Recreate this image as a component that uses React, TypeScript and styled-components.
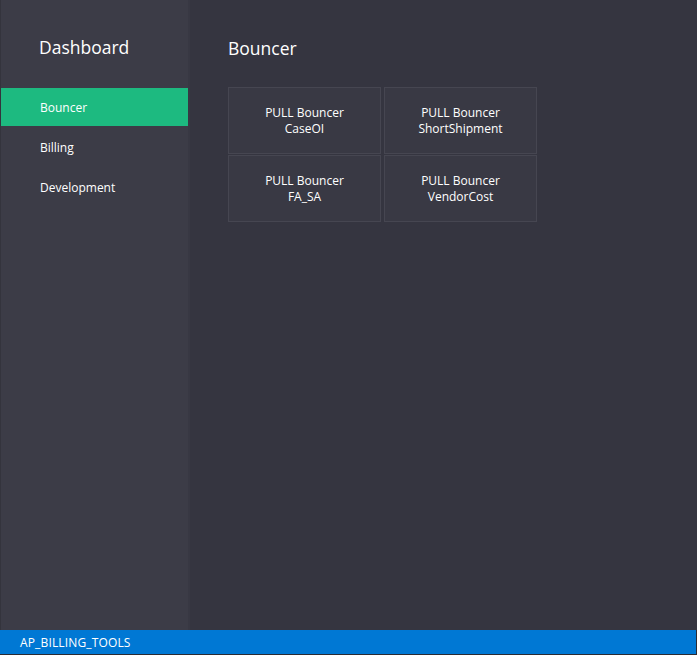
import React from "react";
import styled, { createGlobalStyle } from "styled-components";

const Global = createGlobalStyle`
  html, body { margin: 0; padding: 0; height: 100%; background: #353540; }
  #root { height: 100%; }
  * { box-sizing: border-box; }
`;

const Window = styled.div`
  width: 697px;
  height: 655px;
  display: flex;
  flex-direction: column;
  font-family: "Open Sans", "Noto Sans", "DejaVu Sans", sans-serif;
  color: #ffffff;
  background: #353540;
`;

const Body = styled.div`
  flex: 1;
  display: flex;
  min-height: 0;
`;

const Sidebar = styled.nav`
  width: 190px;
  flex-shrink: 0;
  background: #3c3c47;
  border-right: 2px solid #383843;
  border-left: 1px solid #34343d;
  display: flex;
  flex-direction: column;
  padding-top: 34px;
`;

const Brand = styled.h1`
  margin: 0 0 27px 38px;
  font-size: 17.5px;
  font-weight: 400;
  line-height: 26px;
  color: #ffffff;
`;

const NavItem = styled.div<{ $active?: boolean }>`
  height: 38px;
  margin: 1px 0;
  padding-left: 39px;
  display: flex;
  align-items: center;
  font-size: 12px;
  background: ${(p) => (p.$active ? "#1dba80" : "transparent")};
  color: #ffffff;
`;

const Main = styled.main`
  flex: 1;
  padding: 35px 0 0 38px;
  display: flex;
  flex-direction: column;
`;

const Title = styled.h2`
  margin: 0 0 26px 0;
  font-size: 17.5px;
  font-weight: 400;
  line-height: 26px;
  color: #ffffff;
`;

const Grid = styled.div`
  display: grid;
  grid-template-columns: repeat(2, 153px);
  grid-auto-rows: 67px;
  column-gap: 3px;
  row-gap: 1px;
`;

const Tile = styled.button`
  background: #393944;
  border: 1px solid #464651;
  color: #ffffff;
  font-family: inherit;
  font-size: 12px;
  line-height: 16px;
  display: flex;
  flex-direction: column;
  align-items: center;
  justify-content: center;
  padding: 0;
  cursor: pointer;
`;

const StatusBar = styled.footer`
  height: 25px;
  background: #0078d4;
  border-right: 1px solid #2b2b33;
  border-bottom: 1px solid #2b2b33;
  display: flex;
  align-items: center;
  padding-left: 20px;
  font-size: 12px;
  letter-spacing: 0.15px;
  color: #ffffff;
`;

const tiles = [
  ["PULL Bouncer", "CaseOI"],
  ["PULL Bouncer", "ShortShipment"],
  ["PULL Bouncer", "FA_SA"],
  ["PULL Bouncer", "VendorCost"],
];

export default function App() {
  return (
    <>
      <Global />
      <Window>
        <Body>
          <Sidebar>
            <Brand>Dashboard</Brand>
            <NavItem $active>Bouncer</NavItem>
            <NavItem>Billing</NavItem>
            <NavItem>Development</NavItem>
          </Sidebar>
          <Main>
            <Title>Bouncer</Title>
            <Grid>
              {tiles.map(([a, b]) => (
                <Tile key={b}>
                  <span>{a}</span>
                  <span>{b}</span>
                </Tile>
              ))}
            </Grid>
          </Main>
        </Body>
        <StatusBar>AP_BILLING_TOOLS</StatusBar>
      </Window>
    </>
  );
}
